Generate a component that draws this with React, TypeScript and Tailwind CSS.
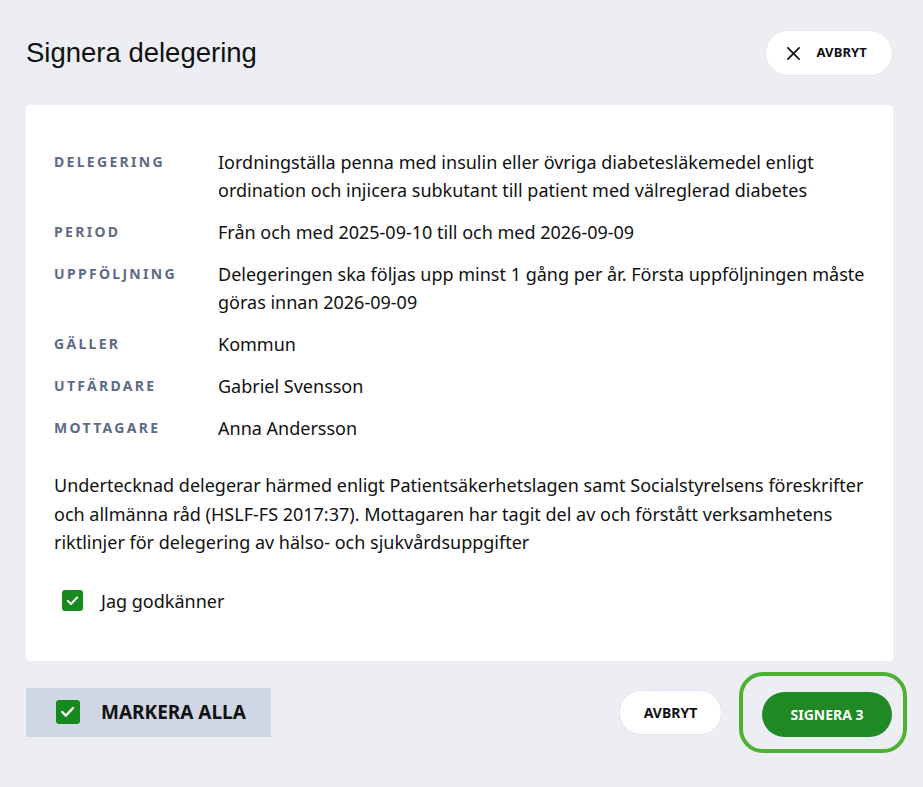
import React from 'react';

const rows: { label: string; value: string }[] = [
  {
    label: 'Delegering',
    value:
      'Iordningställa penna med insulin eller övriga diabetesläkemedel enligt ordination och injicera subkutant till patient med välreglerad diabetes',
  },
  { label: 'Period', value: 'Från och med 2025-09-10 till och med 2026-09-09' },
  {
    label: 'Uppföljning',
    value: 'Delegeringen ska följas upp minst 1 gång per år. Första uppföljningen måste göras innan 2026-09-09',
  },
  { label: 'Gäller', value: 'Kommun' },
  { label: 'Utfärdare', value: 'Gabriel Svensson' },
  { label: 'Mottagare', value: 'Anna Andersson' },
];

const Check: React.FC<{ size: string }> = ({ size }) => (
  <span className={`${size} flex items-center justify-center rounded-[3px] bg-[#168a1e] shrink-0`}>
    <svg viewBox="0 0 24 24" className="w-[72%] h-[72%]" fill="none" stroke="white" strokeWidth="3.2" strokeLinecap="round" strokeLinejoin="round">
      <path d="M4.5 12.5l5 5L19.5 7" />
    </svg>
  </span>
);

const App: React.FC = () => {
  return (
    <div className="w-[923px] h-[787px] bg-[#eceef3] font-['Noto_Sans',sans-serif] text-[#111] overflow-hidden">
      <div className="flex items-center justify-between pl-[26px] pr-[30px] pt-[30px] h-[105px] pb-[29px]">
        <h1 className="font-['Liberation_Sans',Arial,sans-serif] text-[27.5px] text-[#111]">Signera delegering</h1>
        <button className="flex items-center gap-[15px] h-[46px] pl-[20px] pr-[25px] bg-white rounded-full border border-[#e3e6ec]">
          <svg viewBox="0 0 16 16" className="w-[15px] h-[15px]" fill="none" stroke="#111" strokeWidth="1.8" strokeLinecap="round">
            <path d="M2 2l12 12M14 2L2 14" />
          </svg>
          <span className="text-[13px] font-bold tracking-[0.01em]">AVBRYT</span>
        </button>
      </div>

      <div className="mx-[26px] w-[867px] bg-white rounded-[4px] pl-[28px] pr-[28px] pt-[43px] pb-[46px]">
        <div className="grid grid-cols-[164px_1fr] gap-y-[14px]">
          {rows.map(r => (
            <React.Fragment key={r.label}>
              <div className="text-[14px] leading-[28px] font-bold uppercase tracking-[0.165em] text-[#5e6a86]">{r.label}</div>
              <div className="text-[18px] leading-[28px]">{r.value}</div>
            </React.Fragment>
          ))}
        </div>
        <p className="mt-[29px] text-[18px] leading-[28.5px]">
          Undertecknad delegerar härmed enligt Patientsäkerhetslagen samt Socialstyrelsens föreskrifter och allmänna råd
          (HSLF-FS 2017:37). Mottagaren har tagit del av och förstått verksamhetens riktlinjer för delegering av hälso- och
          sjukvårdsuppgifter
        </p>
        <label className="mt-[30px] ml-[8px] flex items-center gap-[18px] text-[18px] leading-[28px]">
          <Check size="w-[21px] h-[21px]" />
          Jag godkänner
        </label>
      </div>

      <div className="flex items-center justify-between pl-[26px] pr-[16px] pt-[11px]">
        <div className="flex items-center gap-[21px] w-[245px] h-[49px] bg-[#d0d7e4] pl-[30px]">
          <Check size="w-[24px] h-[24px]" />
          <span className="text-[19px] font-bold">MARKERA ALLA</span>
        </div>
        <div className="flex items-center gap-[17px]">
          <button className="h-[45px] w-[103px] bg-white rounded-full border border-[#e3e6ec] text-[14px] font-bold">AVBRYT</button>
          <div className="rounded-[24px] border-[4px] border-[#4cb232] pl-[19px] pr-[11px] pt-[16px] pb-[12px]">
            <button className="block h-[45px] w-[130px] bg-[#1f8a23] rounded-full text-white text-[14px] font-bold">SIGNERA 3</button>
          </div>
        </div>
      </div>
    </div>
  );
};

export default App;
